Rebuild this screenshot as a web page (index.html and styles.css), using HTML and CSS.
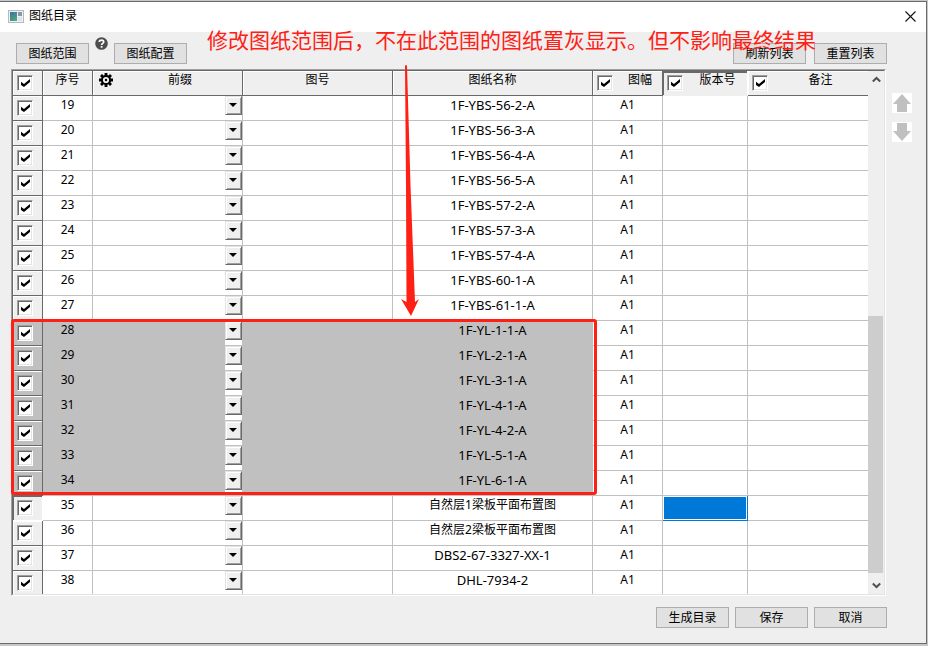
FILE: index.html
```
<!DOCTYPE html>
<html lang="zh-CN">
	<head>
		<meta charset="UTF-8" />
		<meta name="viewport" content="width=device-width, initial-scale=1.0" />
		<title>图纸目录</title>
		<link rel="stylesheet" href="styles.css">
	</head>
	<body>
		<main class="window">
			<header class="titlebar">
				<svg class="app-icon" width="16" height="13" viewBox="0 0 16 13">
					<defs>
						<linearGradient id="pane" x2="0.6" y2="1">
							<stop offset="0" stop-color="#3a6fa8" />
							<stop offset="1" stop-color="#4fa878" />
						</linearGradient>
					</defs>
					<rect x="0.5" y="0.5" width="15" height="12" fill="#eef1f4" stroke="#b4bac4" />
					<rect x="2" y="2" width="7" height="9" fill="url(#pane)" />
					<rect x="10" y="2" width="4" height="4" fill="#8c96a4" />
					<rect x="10" y="7" width="4" height="4" fill="#dfe4ea" />
				</svg>
				<h1>图纸目录</h1>
				<button type="button" class="close" aria-label="关闭">
					<svg width="11" height="11" viewBox="0 0 11 11"><path d="M.5.5l10 10M10.5.5l-10 10" stroke="#111" stroke-width="1.1" /></svg>
				</button>
			</header>

			<div class="toolbar">
				<button type="button" class="btn">图纸范围</button>
				<button type="button" class="help" aria-label="帮助">
					<svg width="13" height="13" viewBox="0 0 13 13">
						<circle cx="6.5" cy="6.5" r="6.3" fill="#4d4d4d" />
						<path d="M4.3 5C4.3 2.4 8.7 2.4 8.7 5C8.7 6.4 6.6 6.4 6.6 8" fill="none" stroke="#fff" stroke-width="1.7" />
						<rect x="5.7" y="9" width="1.8" height="1.7" fill="#fff" />
					</svg>
				</button>
				<button type="button" class="btn">图纸配置</button>
				<span class="spacer"></span>
				<button type="button" class="btn">刷新列表</button>
				<button type="button" class="btn">重置列表</button>
			</div>

			<div class="content">
				<div class="list">
					<div class="list-inner">
						<table>
							<colgroup>
								<col class="c-check"><col class="c-no"><col class="c-prefix"><col class="c-code">
								<col class="c-name"><col class="c-size"><col class="c-ver"><col>
							</colgroup>
							<thead>
								<tr>
									<th><input type="checkbox" aria-label="全选" checked></th>
									<th>序号</th>
									<th>
										<div class="head">
											<svg class="gear" width="14" height="14" viewBox="0 0 14 14">
												<circle cx="7" cy="7" r="4.1" fill="none" stroke="#000" stroke-width="2" />
												<path d="M7 0v3M7 11v3M0 7h3M11 7h3M2 2l2.200 2.200M9.800 9.800L12 12M12 2L9.800 4.200M4.200 9.800L2 12" stroke="#000" stroke-width="2.800" />
												<circle cx="7" cy="7" r="1.2" fill="#000" />
											</svg>
											<span>前缀</span>
										</div>
									</th>
									<th>图号</th>
									<th>图纸名称</th>
									<th><div class="head"><input type="checkbox" id="col-size" checked><label for="col-size">图幅</label></div></th>
									<th class="pressed"><div class="head"><input type="checkbox" id="col-ver" checked><label for="col-ver">版本号</label></div></th>
									<th class="last"><div class="head"><input type="checkbox" id="col-note" checked><label for="col-note">备注</label></div></th>
								</tr>
							</thead>
							<tbody id="rows"></tbody>
						</table>
						<div class="scrollbar">
							<button type="button" aria-label="向上滚动">
								<svg width="9" height="7" viewBox="0 0 9 7"><path d="M.8 5.5L4.5 2l3.7 3.5" fill="none" stroke="#505050" stroke-width="2" /></svg>
							</button>
							<div class="track"><div class="thumb"></div></div>
							<button type="button" aria-label="向下滚动">
								<svg width="9" height="7" viewBox="0 0 9 7"><path d="M.8 1.5L4.5 5l3.7-3.5" fill="none" stroke="#505050" stroke-width="2" /></svg>
							</button>
						</div>
					</div>
					<div class="mark-box"></div>
					<svg class="mark-arrow" width="18" height="252" viewBox="0 0 18 252">
						<path d="M4 1Q5 -1 6 1L9.500 120L14 237L18 234L10 251L0 234L5.500 237L5 120Z" fill="#ff2015" />
					</svg>
				</div>
				<div class="move">
					<button type="button" aria-label="上移">
						<svg width="18" height="18" viewBox="0 0 18 18"><path d="M9 0L18 10H14V18H4V10H0Z" fill="#c0c0c0" /></svg>
					</button>
					<button type="button" aria-label="下移">
						<svg width="18" height="18" viewBox="0 0 18 18"><path d="M9 18L0 8H4V0H14V8H18Z" fill="#c0c0c0" /></svg>
					</button>
				</div>
			</div>

			<footer class="actions">
				<button type="button" class="btn">生成目录</button>
				<button type="button" class="btn">保存</button>
				<button type="button" class="btn">取消</button>
			</footer>

			<p class="mark-text">修改图纸范围后，不在此范围的图纸置灰显示。但不影响最终结果</p>
		</main>
		<script src="app.js"></script>
	</body>
</html>
```
FILE: styles.css
```
* {
	box-sizing: border-box;
}

body {
	margin: 0;
	padding: 1px 1px 2px 0;
	height: 100vh;
	background: #c4c8c8;
	font: 12px/18px "Noto Sans", "Noto Sans CJK SC", sans-serif;
	color: #000;
}

button,
select {
	font: inherit;
	color: inherit;
}

.window {
	position: relative;
	display: flex;
	flex-direction: column;
	height: 100%;
	background: #efefef;
	border: 1px solid #6b6b6b;
	border-left: 0;
}

/* title bar */
.titlebar {
	display: flex;
	align-items: center;
	height: 30px;
	padding: 0 10px 2px 8px;
	background: #fff;
}

.titlebar h1 {
	flex: 1;
	margin: 0 0 0 5px;
	font-size: 12px;
	font-weight: normal;
}

.close,
.help,
.move button,
.scrollbar button {
	display: flex;
	align-items: center;
	justify-content: center;
	padding: 0;
	border: 0;
	background: none;
}

/* toolbar */
.toolbar {
	display: flex;
	align-items: flex-end;
	gap: 6px;
	height: 37px;
	padding: 5px 39px 5px 16px;
}

.toolbar .btn:last-child {
	margin-left: 2px;
}

.help {
	align-self: flex-start;
}

.spacer {
	flex: 1;
}

.btn {
	width: 73px;
	height: 21px;
	padding: 0;
	border: 1px solid #adadad;
	background: #e1e1e1;
	line-height: 19px;
}

/* list */
.content {
	display: flex;
	flex: 1;
	min-height: 0;
	padding-left: 11px;
}

.list {
	position: relative;
	flex: 1;
	border: 1px solid;
	border-color: #a0a0a0 #fff #fff #a0a0a0;
}

.list-inner {
	display: flex;
	align-items: flex-start;
	height: 100%;
	overflow: hidden;
	border: 1px solid;
	border-color: #696969 #e3e3e3 #e3e3e3 #696969;
	background: #fff;
}

table {
	flex: 1;
	width: 100%;
	table-layout: fixed;
	border-spacing: 0;
}

.c-check { width: 30px; }
.c-no { width: 50px; }
.c-prefix { width: 150px; }
.c-code { width: 150px; }
.c-name { width: 200px; }
.c-size { width: 70px; }
.c-ver { width: 85px; }

th,
td {
	height: 25px;
	padding: 0;
	border: solid #c0c0c0;
	border-width: 0 1px 1px 0;
	font-weight: normal;
	text-align: center;
	vertical-align: top;
	white-space: nowrap;
}

th {
	background: #efefef;
	border-color: #696969;
	box-shadow: inset 1px 1px #fff;
}

td:last-child,
th.last {
	border-right: 0;
}

th.pressed {
	border-color: #fff #fff #efefef;
	box-shadow: inset 1px 2px #696969;
}

tbody th.pressed {
	border-color: #fff;
	box-shadow: inset 1px 1px #696969;
}

.out td,
.out th {
	background: #c0c0c0;
}

.out td:nth-child(n + 6) {
	background: #fff;
}

/* drawing codes */
td.code {
	font-size: 13px;
}

td.current {
	padding: 1px;
	border-color: #0078d7;
	background: #0078d7 content-box;
}

.head {
	display: flex;
	padding-left: 4px;
}

.head span,
.head label {
	flex: 1;
	padding-left: 5px;
}

.gear {
	margin: 2px 0 0 2px;
}

input[type="checkbox"] {
	appearance: none;
	display: block;
	flex: none;
	width: 16px;
	height: 16px;
	margin: 4px 0 0 4px;
	padding: 3px;
	border: 1px solid;
	border-color: #a0a0a0 #fff #fff #a0a0a0;
	background: #fff;
	box-shadow: inset 1px 1px #696969, inset -1px -1px #e3e3e3;
}

.head input[type="checkbox"] {
	margin-left: 0;
}

input[type="checkbox"]:checked::before {
	content: "";
	display: block;
	width: 9px;
	height: 8px;
	background: #000;
	clip-path: polygon(0 34%, 33% 62%, 100% 0, 100% 38%, 33% 100%, 0 76%);
}

/* prefix drop-down */
.combo {
	position: relative;
	height: 24px;
}

.combo select {
	appearance: none;
	display: block;
	width: 100%;
	height: 24px;
	padding: 0 18px 0 4px;
	border: 0;
	background: none;
}

.combo .arrow {
	position: absolute;
	top: 0;
	right: 0;
	width: 17px;
	height: 24px;
	background: #fff;
	pointer-events: none;
}

.combo .arrow::before {
	content: "";
	display: block;
	height: 17px;
	border: 1px solid;
	border-color: #e3e3e3 #696969 #696969 #e3e3e3;
	background: #efefef;
	box-shadow: inset 1px 1px #fff, inset -1px -1px #a0a0a0;
}

.combo .arrow::after {
	content: "";
	position: absolute;
	top: 7px;
	left: 4px;
	border: 4px solid transparent;
	border-top-color: #000;
	border-bottom: 0;
}

/* scroll bar */
.scrollbar {
	display: flex;
	flex-direction: column;
	width: 16px;
	height: 100%;
	background: #efefef;
}

.scrollbar button {
	height: 17px;
}

.track {
	display: flex;
	flex: 1;
	flex-direction: column;
	justify-content: flex-end;
	padding-bottom: 4px;
}

.thumb {
	width: 15px;
	height: 53%;
	background: #cdcdcd;
}

.move {
	display: flex;
	flex-direction: column;
	gap: 9px;
	width: 40px;
	padding: 24px 0 0 6px;
}

.move button {
	width: 20px;
	height: 20px;
	background: #fff;
}

.actions {
	display: flex;
	justify-content: flex-end;
	gap: 6px;
	padding: 11px 39px 15px 16px;
}

/* red notes */
.mark-text {
	position: absolute;
	top: 22px;
	left: 207px;
	margin: 0;
	color: #ff2015;
	font: 21px/30px "Noto Sans CJK SC", sans-serif;
	white-space: nowrap;
	pointer-events: none;
}

.mark-box {
	position: absolute;
	top: 249px;
	left: -1px;
	width: 586px;
	height: 176px;
	border: 3px solid #ff2015;
	border-radius: 3px;
	pointer-events: none;
}

.mark-arrow {
	position: absolute;
	top: -5px;
	left: 389px;
	pointer-events: none;
}
```
FILE: app.js
```
const names = [
	"1F-YBS-56-2-A", "1F-YBS-56-3-A", "1F-YBS-56-4-A", "1F-YBS-56-5-A",
	"1F-YBS-57-2-A", "1F-YBS-57-3-A", "1F-YBS-57-4-A", "1F-YBS-60-1-A", "1F-YBS-61-1-A",
	"1F-YL-1-1-A", "1F-YL-2-1-A", "1F-YL-3-1-A", "1F-YL-4-1-A", "1F-YL-4-2-A", "1F-YL-5-1-A", "1F-YL-6-1-A",
	"自然层1梁板平面布置图", "自然层2梁板平面布置图", "DBS2-67-3327-XX-1", "DHL-7934-2",
];
const firstNo = 19;
const current = 35;

document.getElementById("rows").innerHTML = names.map((name, i) => {
	const no = firstNo + i;
	// drawings outside the chosen range are greyed
	const out = no >= 28 && no <= 34;
	return `
		<tr class="${out ? "out" : ""}">
			<th class="${no === current ? "pressed" : ""}"><input type="checkbox" aria-label="选择 ${no}" checked></th>
			<td>${no}</td>
			<td><div class="combo"><select aria-label="前缀 ${no}"><option></option></select><span class="arrow"></span></div></td>
			<td></td>
			<td class="${name.includes("-") ? "code" : ""}">${name}</td>
			<td>A1</td>
			<td class="${no === current ? "current" : ""}"></td>
			<td></td>
		</tr>`;
}).join("");
```
